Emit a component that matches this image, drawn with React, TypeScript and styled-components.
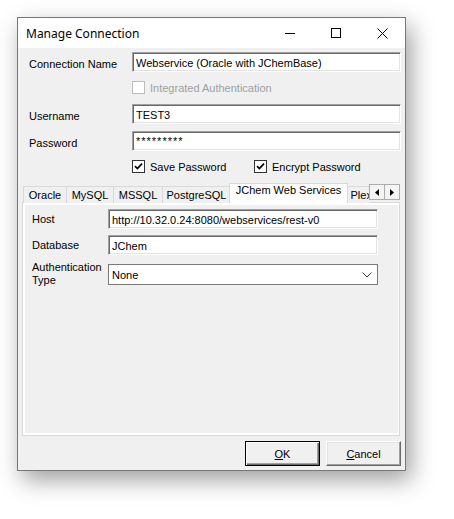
import React from "react";
import styled, { createGlobalStyle, css } from "styled-components";

const GlobalStyle = createGlobalStyle`
  html, body {
    margin: 0;
    padding: 0;
    background: #ffffff;
  }
  body {
    font-family: "Liberation Sans", Arial, sans-serif;
    font-size: 11px;
    color: #000;
  }
`;

const Desk = styled.div`
  width: 454px;
  height: 519px;
  box-sizing: border-box;
  padding: 17px;
  background: #fff;
`;

const Window = styled.div`
  width: 389px;
  height: 454px;
  box-sizing: border-box;
  border: 1px solid #777777;
  background: #f0f0f0;
  box-shadow: 5px 9px 22px rgba(0, 0, 0, 0.38);
  display: flex;
  flex-direction: column;
`;

const TitleBar = styled.div`
  height: 30px;
  flex: none;
  background: #ffffff;
  display: flex;
  align-items: center;
`;

const Title = styled.div`
  flex: 1;
  padding-left: 8px;
  font-family: "Noto Sans", "Open Sans", sans-serif;
  font-size: 12px;
  color: #000;
`;

const CaptionButton = styled.div`
  width: 46px;
  height: 30px;
  display: flex;
  align-items: center;
  justify-content: center;
`;

const Body = styled.div`
  flex: 1;
  display: flex;
  flex-direction: column;
  padding: 4px 4px 4px 0;
`;

const Row = styled.div<{ $top?: number }>`
  display: grid;
  grid-template-columns: 114px 269px;
  align-items: center;
  margin-top: ${(p) => p.$top ?? 0}px;
`;

const Label = styled.div`
  padding-left: 11px;
  padding-top: 3px;
  white-space: nowrap;
`;

const TextBox = styled.div<{ $w?: number }>`
  height: 20px;
  box-sizing: border-box;
  background: #fff;
  border: 1px solid;
  border-color: #a0a0a0 #ffffff #ffffff #a0a0a0;
  box-shadow: inset 1px 1px 0 #696969, inset -1px -1px 0 #e3e3e3;
  padding: 1px 2px 0 3px;
  display: flex;
  align-items: center;
  white-space: nowrap;
  overflow: hidden;
`;

const Stars = styled.span`
  letter-spacing: 1px;
  font-size: 11px;
  position: relative;
  top: -1px;
`;

const Checks = styled.div`
  display: grid;
  grid-template-columns: 122px auto;
  align-items: center;
`;

const CheckItem = styled.div<{ $disabled?: boolean }>`
  display: flex;
  align-items: center;
  gap: 5px;
  height: 13px;
  color: ${(p) => (p.$disabled ? "#a0a0a0" : "#000")};
  white-space: nowrap;
`;

const Box = styled.span<{ $disabled?: boolean }>`
  width: 13px;
  height: 13px;
  box-sizing: border-box;
  flex: none;
  background: #fff;
  border: 1px solid ${(p) => (p.$disabled ? "#bcbcbc" : "#333333")};
  display: flex;
  align-items: center;
  justify-content: center;
`;

const TabControl = styled.div`
  margin-top: 10px;
  margin-left: 4px;
  width: 379px;
  display: flex;
  flex-direction: column;
`;

const TabStrip = styled.div`
  height: 20px;
  display: flex;
  position: relative;
  z-index: 1;
  margin-bottom: -1px;
`;

const TabList = styled.div`
  width: 348px;
  height: 20px;
  padding-left: 1px;
  box-sizing: border-box;
  display: flex;
  align-items: flex-end;
  overflow: hidden;
`;

const Tab = styled.div<{ $w: number; $active?: boolean }>`
  flex: none;
  width: ${(p) => p.$w}px;
  height: 17px;
  box-sizing: border-box;
  margin-left: -1px;
  border: 1px solid #d9d9d9;
  border-bottom: none;
  background: #f0f0f0;
  display: flex;
  justify-content: center;
  padding-top: 2px;
  white-space: nowrap;
  overflow: hidden;
  &:first-child {
    margin-left: 0;
  }
  ${(p) =>
    p.$active &&
    css`
      height: 20px;
      margin-left: -2px;
      padding-top: 0px;
      background: #ffffff;
      position: relative;
      z-index: 1;
    `}
`;

const Scrollers = styled.div`
  display: flex;
  padding-top: 1px;
`;

const ScrollButton = styled.div`
  width: 16px;
  height: 16px;
  box-sizing: border-box;
  margin-left: -1px;
  border: 1px solid #adadad;
  background: #f4f4f4;
  display: flex;
  align-items: center;
  justify-content: center;
`;

const Panel = styled.div`
  width: 378px;
  height: 234px;
  box-sizing: border-box;
  border: 1px solid #d9d9d9;
  background: #ffffff;
  padding: 2px 1px 2px 2px;
  display: flex;
`;

const TabPage = styled.div`
  flex: 1;
  background: #f0f0f0;
  padding: 4px 0 0 7px;
  display: grid;
  grid-template-columns: 76px 270px;
  grid-auto-rows: min-content;
  row-gap: 6px;
  align-items: center;
`;

const PageLabel = styled.div<{ $top?: boolean }>`
  line-height: 13px;
  ${(p) =>
    p.$top &&
    css`
      align-self: start;
      margin-top: 0px;
    `}
`;

const Combo = styled.div`
  height: 21px;
  box-sizing: border-box;
  border: 1px solid #7a7a7a;
  background: #fff;
  display: flex;
  align-items: center;
  justify-content: space-between;
  padding: 1px 5px 0 3px;
`;

const Footer = styled.div`
  margin-top: 5px;
  display: flex;
  justify-content: flex-end;
  gap: 6px;
`;

const Button = styled.div<{ $default?: boolean }>`
  width: 75px;
  height: 25px;
  box-sizing: border-box;
  background: #f0f0f0;
  display: flex;
  align-items: center;
  justify-content: center;
  padding-top: 1px;
  border: 1px solid;
  border-color: #ffffff #696969 #696969 #ffffff;
  box-shadow: inset -1px -1px 0 #a0a0a0, inset 1px 1px 0 #e3e3e3;
  ${(p) =>
    p.$default &&
    css`
      border-color: #000;
      box-shadow: inset 1px 1px 0 #ffffff, inset -1px -1px 0 #696969,
        inset -2px -2px 0 #a0a0a0;
    `}
`;

const Check = () => (
  <svg width="9" height="9" viewBox="0 0 9 9">
    <path d="M1 4.2 L3.4 6.6 L8 1.6" fill="none" stroke="#000" strokeWidth="1.7" />
  </svg>
);

const tabs = [
  { name: "Oracle", w: 44 },
  { name: "MySQL", w: 48 },
  { name: "MSSQL", w: 50 },
  { name: "PostgreSQL", w: 69 },
  { name: "JChem Web Services", w: 119, active: true },
  { name: "Plexus", w: 40 },
];

export default function App() {
  return (
    <>
      <GlobalStyle />
      <Desk>
        <Window>
          <TitleBar>
            <Title>Manage Connection</Title>
            <CaptionButton>
              <svg width="10" height="10" viewBox="0 0 10 10">
                <path d="M0 5.5 H10" stroke="#000" strokeWidth="1" />
              </svg>
            </CaptionButton>
            <CaptionButton>
              <svg width="10" height="10" viewBox="0 0 10 10">
                <rect x="0.5" y="0.5" width="9" height="9" fill="none" stroke="#000" strokeWidth="1" />
              </svg>
            </CaptionButton>
            <CaptionButton>
              <svg width="11" height="11" viewBox="0 0 11 11">
                <path d="M0.5 0.5 L10.5 10.5 M10.5 0.5 L0.5 10.5" stroke="#000" strokeWidth="1" />
              </svg>
            </CaptionButton>
          </TitleBar>

          <Body>
            <Row>
              <Label>Connection Name</Label>
              <TextBox>Webservice (Oracle with JChemBase)</TextBox>
            </Row>
            <Row $top={9}>
              <span />
              <CheckItem $disabled>
                <Box $disabled />
                Integrated Authentication
              </CheckItem>
            </Row>
            <Row $top={10}>
              <Label>Username</Label>
              <TextBox>TEST3</TextBox>
            </Row>
            <Row $top={7}>
              <Label>Password</Label>
              <TextBox>
                <Stars>*********</Stars>
              </TextBox>
            </Row>
            <Row $top={9}>
              <span />
              <Checks>
                <CheckItem>
                  <Box>
                    <Check />
                  </Box>
                  Save Password
                </CheckItem>
                <CheckItem>
                  <Box>
                    <Check />
                  </Box>
                  Encrypt Password
                </CheckItem>
              </Checks>
            </Row>

            <TabControl>
              <TabStrip>
                <TabList>
                  {tabs.map((t) => (
                    <Tab key={t.name} $w={t.w} $active={t.active}>
                      {t.name}
                    </Tab>
                  ))}
                </TabList>
                <Scrollers>
                  <ScrollButton>
                    <svg width="4" height="7" viewBox="0 0 4 7">
                      <path d="M4 0 L0 3.5 L4 7 Z" fill="#000" />
                    </svg>
                  </ScrollButton>
                  <ScrollButton>
                    <svg width="4" height="7" viewBox="0 0 4 7">
                      <path d="M0 0 L4 3.5 L0 7 Z" fill="#000" />
                    </svg>
                  </ScrollButton>
                </Scrollers>
              </TabStrip>
              <Panel>
                <TabPage>
                  <PageLabel>Host</PageLabel>
                  <TextBox>http://10.32.0.24:8080/webservices/rest-v0</TextBox>
                  <PageLabel>Database</PageLabel>
                  <TextBox>JChem</TextBox>
                  <PageLabel $top>
                    Authentication
                    <br />
                    Type
                  </PageLabel>
                  <Combo>
                    None
                    <svg width="10" height="6" viewBox="0 0 10 6">
                      <path d="M0.5 0.5 L5 5 L9.5 0.5" fill="none" stroke="#444" strokeWidth="1" />
                    </svg>
                  </Combo>
                </TabPage>
              </Panel>
            </TabControl>

            <Footer>
              <Button $default>
                <span>
                  <u>O</u>K
                </span>
              </Button>
              <Button>
                <span>
                  <u>C</u>ancel
                </span>
              </Button>
            </Footer>
          </Body>
        </Window>
      </Desk>
    </>
  );
}
